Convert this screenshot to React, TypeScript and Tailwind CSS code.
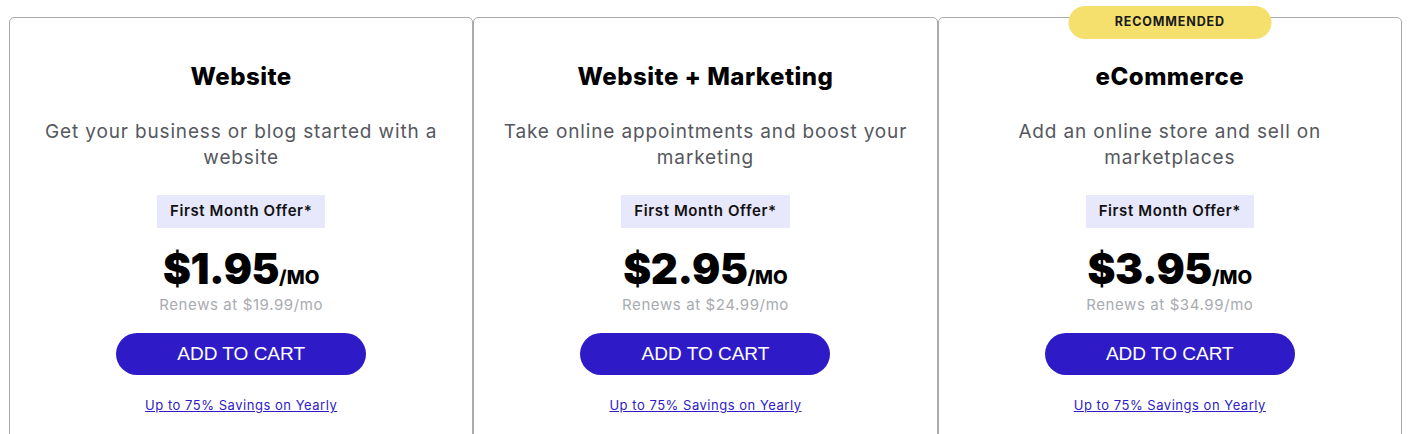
const plans = [
  {
    name: 'Website',
    desc: 'Get your business or blog started with a website',
    price: '$1.95',
    renews: 'Renews at $19.99/mo',
    recommended: false,
  },
  {
    name: 'Website + Marketing',
    desc: 'Take online appointments and boost your marketing',
    price: '$2.95',
    renews: 'Renews at $24.99/mo',
    recommended: false,
  },
  {
    name: 'eCommerce',
    desc: 'Add an online store and sell on marketplaces',
    price: '$3.95',
    renews: 'Renews at $34.99/mo',
    recommended: true,
  },
]

function PlanCard({ plan }: { plan: (typeof plans)[number] }) {
  return (
    <div className="relative flex-1 border border-[#a9abae] rounded-t-[5px] px-6 pt-[43px] pb-16 flex flex-col items-center text-center">
      {plan.recommended && (
        <div className="absolute left-1/2 -translate-x-1/2 -top-[12px] w-[203px] h-[33px] rounded-full bg-[#f5e06e] flex items-center justify-center text-[12.5px] font-bold tracking-[0.07em] text-[#1a1a1a]">
          RECOMMENDED
        </div>
      )}
      <h3 className="text-[24px] leading-[32px] font-extrabold tracking-[0.02em] text-black">{plan.name}</h3>
      <p className="mt-[26px] max-w-[412px] text-[19px] leading-[26px] tracking-[0.045em] text-[#55585e]">{plan.desc}</p>
      <div className="mt-[24px] h-[33px] px-[13px] bg-[#e7e8fc] flex items-center text-[15px] font-semibold tracking-[0.04em] text-[#111]">
        First Month Offer*
      </div>
      <div className="mt-[17px] flex items-baseline leading-[48px]">
        <span className="text-[42px] font-black text-black tracking-[-0.01em]">{plan.price}</span>
        <span className="text-[19px] font-extrabold text-black">/MO</span>
      </div>
      <div className="-mt-[7px] text-[15px] leading-[20px] tracking-[0.04em] text-[#a8abb0]">{plan.renews}</div>
      <button className="mt-[18px] w-[250px] h-[42px] rounded-full bg-[#2e1bc7] text-white text-[19px] font-['Liberation_Sans',Arial,sans-serif]">
        ADD TO CART
      </button>
      <a href="#" className="mt-[21px] text-[13px] leading-[18px] tracking-[0.04em] text-[#2e1bc7] underline">
        Up to 75% Savings on Yearly
      </a>
    </div>
  )
}

export default function App() {
  return (
    <div className="h-[434px] overflow-hidden bg-white font-['Inter',sans-serif]">
      <div className="flex pl-[9px] pr-[12px] pt-[17px]">
        {plans.map((p) => (
          <PlanCard key={p.name} plan={p} />
        ))}
      </div>
    </div>
  )
}
